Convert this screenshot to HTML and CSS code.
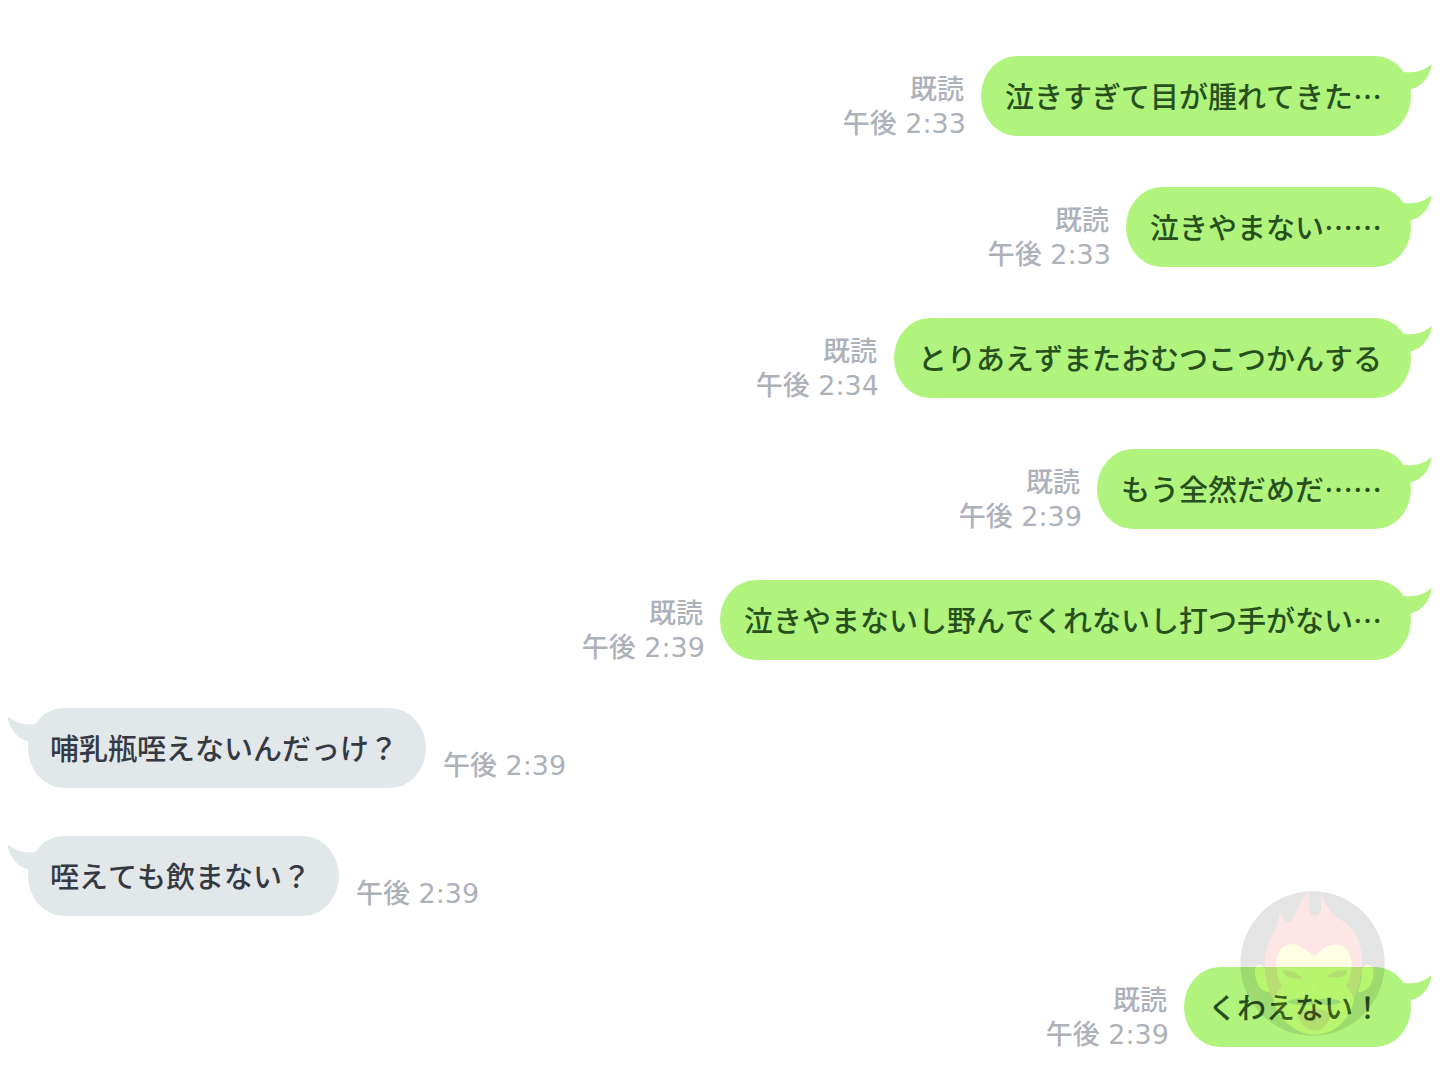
FILE: index.html
```
<!DOCTYPE html>
<html lang="ja">
<head>
    <meta charset="UTF-8">
    <meta name="viewport" content="width=device-width, initial-scale=1.0">
    <title>トーク</title>
    <link rel="stylesheet" href="styles.css">
</head>
<body>
    <svg class="symbols" aria-hidden="true">
        <symbol id="tail" viewBox="0 0 28 26">
            <path d="M0 8C11 9 20 7 27.5 0C27 10 19 23 7 25V26H0Z"/>
        </symbol>
    </svg>
    <main class="chat">
        <div class="message sent">
            <div class="meta"><span>既読</span><time>午後 2:33</time></div>
            <div class="bubble">泣きすぎて目が腫れてきた…<svg class="tail"><use href="#tail"/></svg></div>
        </div>
        <div class="message sent">
            <div class="meta"><span>既読</span><time>午後 2:33</time></div>
            <div class="bubble">泣きやまない……<svg class="tail"><use href="#tail"/></svg></div>
        </div>
        <div class="message sent">
            <div class="meta"><span>既読</span><time>午後 2:34</time></div>
            <div class="bubble">とりあえずまたおむつこつかんする<svg class="tail"><use href="#tail"/></svg></div>
        </div>
        <div class="message sent">
            <div class="meta"><span>既読</span><time>午後 2:39</time></div>
            <div class="bubble">もう全然だめだ……<svg class="tail"><use href="#tail"/></svg></div>
        </div>
        <div class="message sent">
            <div class="meta"><span>既読</span><time>午後 2:39</time></div>
            <div class="bubble">泣きやまないし野んでくれないし打つ手がない…<svg class="tail"><use href="#tail"/></svg></div>
        </div>
        <div class="message received">
            <div class="bubble">哺乳瓶咥えないんだっけ？<svg class="tail"><use href="#tail"/></svg></div>
            <div class="meta"><time>午後 2:39</time></div>
        </div>
        <div class="message received">
            <div class="bubble">咥えても飲まない？<svg class="tail"><use href="#tail"/></svg></div>
            <div class="meta"><time>午後 2:39</time></div>
        </div>
        <div class="message sent">
            <div class="meta"><span>既読</span><time>午後 2:39</time></div>
            <div class="bubble">くわえない！<svg class="tail"><use href="#tail"/></svg></div>
            <!-- watermark -->
            <svg class="watermark" viewBox="60 30 436 436" aria-hidden="true">
                <circle cx="278" cy="248" r="217"/>
                <path fill="#ff1a1a" d="M158 352C138 310 132 262 135 225C138 180 176 150 180 92C190 118 205 133 216 118C230 98 238 55 267 32L267 84C268 111 303 111 304 84L302 35C316 76 335 99 365 118C408 147 428 180 427 255C425 290 415 325 403 352L385 330H175Z"/>
                <path fill="#ffff00" d="M135 262C120 246 104 250 105 274C106 306 122 335 150 334C141 310 137 285 135 262ZM427 262C442 246 462 250 462 274C461 306 445 335 415 334C423 310 427 285 427 262Z"/>
                <path fill="#ffff00" d="M170 262C168 210 190 190 218 191C248 192 264 219 284 224C303 210 320 191 348 191C382 193 397 222 396 260C394 282 387 301 378 315L403 350C400 405 350 462 284 462C220 462 166 405 160 350L187 315C176 300 171 282 170 262Z"/>
                <path d="M200 364C225 348 262 350 282 362C302 350 341 348 366 364C345 374 318 374 284 370C248 374 221 374 200 364Z"/>
                <path fill="#cc3300" d="M232 400Q284 368 334 400C326 432 304 450 284 450C264 450 241 432 232 400Z"/>
                <path fill="#cc3300" d="M190 270C212 266 233 278 248 292C224 296 192 292 190 270ZM382 269C358 264 337 274 320 287C344 293 382 292 382 269Z"/>
                <path fill="#cc3300" d="M260 312L270 318L268 322ZM302 311L292 317L294 321Z"/>
            </svg>
        </div>
    </main>
</body>
</html>
```
FILE: styles.css
```
body {
    margin: 0;
    background: #fff;
    font-family: "Noto Sans CJK JP", sans-serif;
    font-kerning: none;
}
.symbols {
    display: block;
    width: 0;
    height: 0;
}
.chat {
    display: flex;
    flex-direction: column;
    gap: 48px;
    padding: 56px 35px 31px 28px;
}
.message {
    display: flex;
    align-items: flex-end;
    position: relative;
}
.sent {
    justify-content: flex-end;
    gap: 15px;
}
.sent + .sent,
.received + .sent {
    margin-top: 3px;
}
.received {
    gap: 17px;
}
.bubble {
    position: relative;
    box-sizing: border-box;
    min-height: 80px;
    padding: 19px 29px 21px 24px;
    border-radius: 36px / 40px;
    font-size: 29px;
    font-weight: 500;
    line-height: 40px;
}
.sent .bubble {
    background: #b0f47d;
    color: #28501f;
}
.received .bubble {
    padding-right: 28px;
    padding-left: 22px;
    background: #e2e7ea;
    color: #353942;
}
.tail {
    position: absolute;
    top: 8px;
    right: -21px;
    width: 28px;
    height: 26px;
    fill: #b0f47d;
}
.received .tail {
    right: auto;
    left: -21px;
    fill: #e2e7ea;
    transform: scaleX(-1);
}
.meta {
    display: flex;
    flex-direction: column;
    align-items: flex-end;
    flex-shrink: 0;
    font-family: "DejaVu Sans", "Noto Sans CJK JP", sans-serif;
    font-size: 27px;
    font-weight: 500;
    line-height: 34px;
    color: #adb1ba;
}
.meta span {
    padding-right: 2px;
}
.sent .meta {
    margin-bottom: -5px;
}
.received .meta {
    margin-bottom: 5px;
}
.watermark {
    position: absolute;
    right: 26px;
    bottom: 11px;
    width: 145px;
    height: 145px;
    opacity: 0.1;
    pointer-events: none;
}
```
